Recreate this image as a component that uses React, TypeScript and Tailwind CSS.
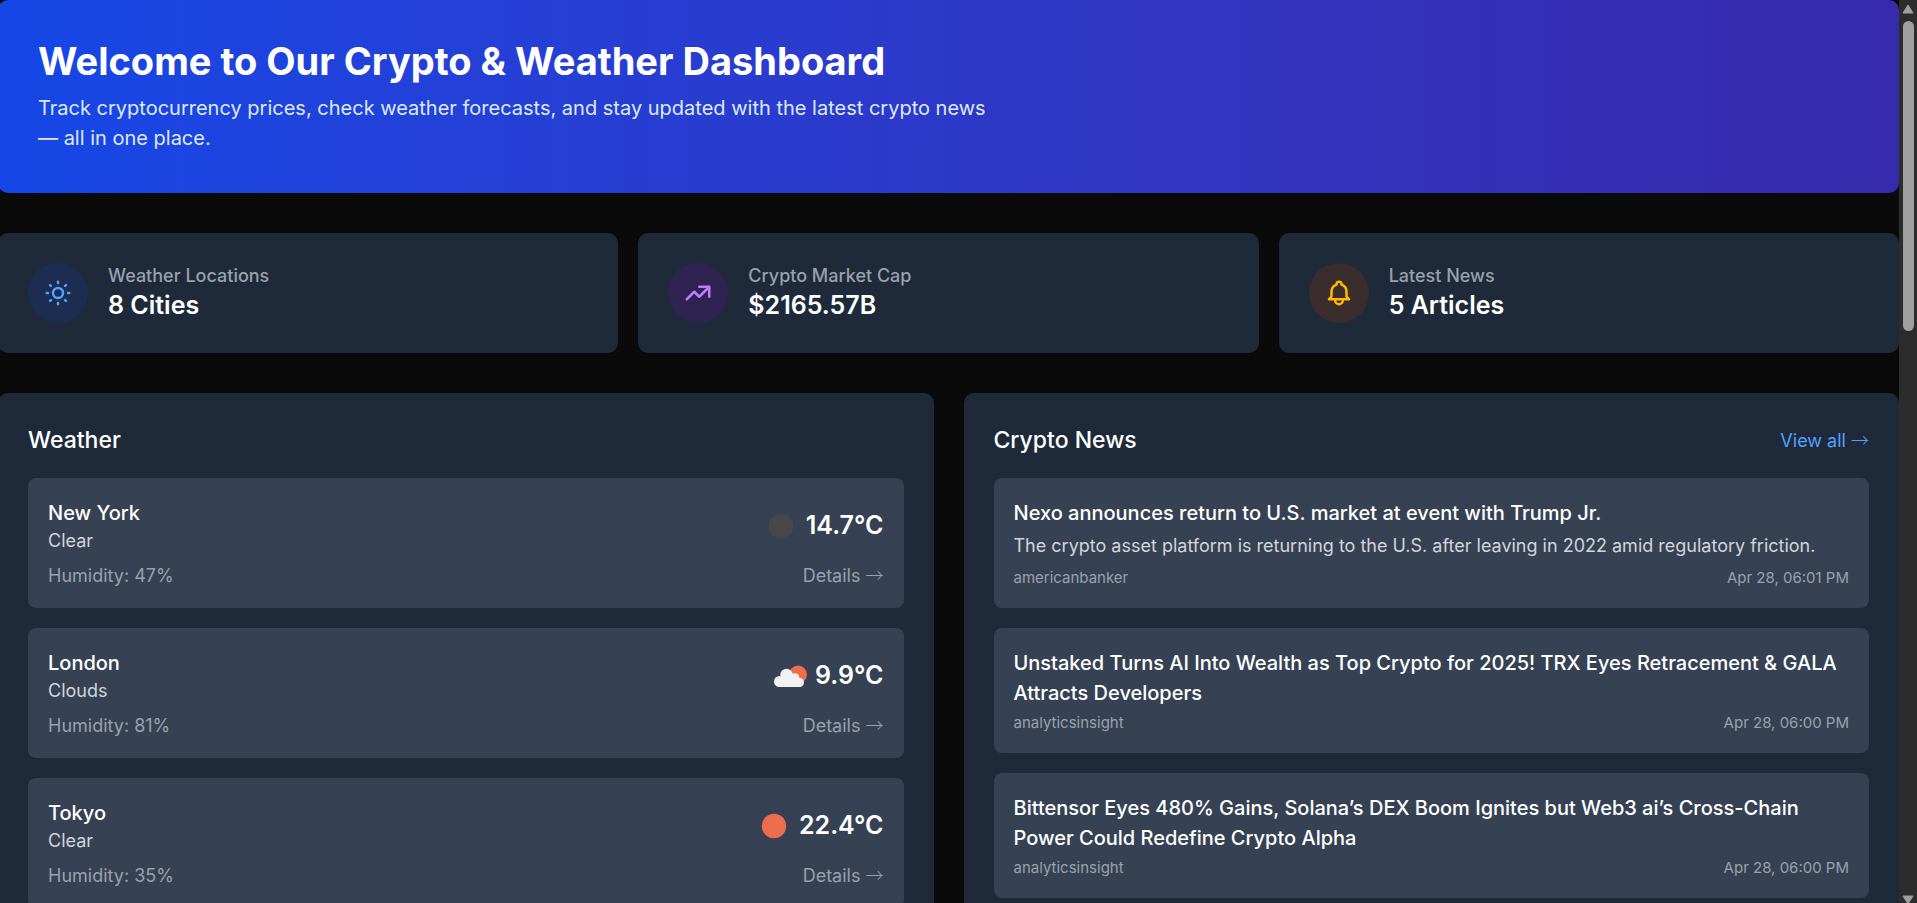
type Sky = "night" | "cloudy" | "sun";

const cities: { name: string; sky: Sky; condition: string; temp: string; humidity: number }[] = [
  { name: "New York", sky: "night", condition: "Clear", temp: "14.7°C", humidity: 47 },
  { name: "London", sky: "cloudy", condition: "Clouds", temp: "9.9°C", humidity: 81 },
  { name: "Tokyo", sky: "sun", condition: "Clear", temp: "22.4°C", humidity: 35 },
];

const articles = [
  {
    title: "Nexo announces return to U.S. market at event with Trump Jr.",
    summary:
      "The crypto asset platform is returning to the U.S. after leaving in 2022 amid regulatory friction.",
    source: "americanbanker",
    date: "Apr 28, 06:01 PM",
  },
  {
    title:
      "Unstaked Turns AI Into Wealth as Top Crypto for 2025! TRX Eyes Retracement & GALA Attracts Developers",
    source: "analyticsinsight",
    date: "Apr 28, 06:00 PM",
  },
  {
    title:
      "Bittensor Eyes 480% Gains, Solana’s DEX Boom Ignites but Web3 ai’s Cross-Chain Power Could Redefine Crypto Alpha",
    source: "analyticsinsight",
    date: "Apr 28, 06:00 PM",
  },
];

const stats = [
  {
    label: "Weather Locations",
    value: "8 Cities",
    tint: "bg-[#1c2d51] text-[#51a2ff]",
    icon: "M12 3v1m0 16v1m9-9h-1M4 12H3m15.364 6.364l-.707-.707M6.343 6.343l-.707-.707m12.728 0l-.707.707M6.343 17.657l-.707.707M16 12a4 4 0 11-8 0 4 4 0 018 0z",
  },
  {
    label: "Crypto Market Cap",
    value: "$2165.57B",
    tint: "bg-[#2f2451] text-[#c27aff]",
    icon: "M13 7h8m0 0v8m0-8l-8 8-4-4-6 6",
  },
  {
    label: "Latest News",
    value: "5 Articles",
    tint: "bg-[#3b2d2d] text-[#ffb900]",
    icon: "M15 17h5l-1.405-1.405A2.032 2.032 0 0118 14.158V11a6.002 6.002 0 00-4-5.659V5a2 2 0 10-4 0v.341C7.67 6.165 6 8.388 6 11v3.159c0 .538-.214 1.055-.595 1.436L4 17h5m6 0v1a3 3 0 11-6 0v-1m6 0H9",
  },
];

function SkyIcon({ sky }: { sky: Sky }) {
  return (
    <svg viewBox="0 0 50 50" className="size-[50px]" aria-hidden="true">
      {sky === "cloudy" ? (
        <>
          <circle cx="33" cy="23.500" r="9" fill="#ec6e4c" />
          <g fill="#f2f2f2">
            <circle cx="14.500" cy="30.500" r="5.500" />
            <circle cx="21.500" cy="24" r="6.200" />
            <circle cx="30" cy="26.500" r="4.300" />
            <circle cx="34.500" cy="31.500" r="4.500" />
            <path d="M14.500 36h20V27L26 22l-8 4z" />
          </g>
        </>
      ) : (
        <circle cx="25" cy="25" r="12.200" fill={sky === "sun" ? "#ec6e4c" : "#48484a"} />
      )}
    </svg>
  );
}

function Arrow() {
  return <span className="font-['Noto_Sans_CJK_JP',sans-serif] leading-none font-light">→</span>;
}

export default function App() {
  return (
    <div className="flex h-screen overflow-hidden bg-[#0a0a0a] font-['Inter',sans-serif] text-white">
      <main className="-ml-0.5 flex min-w-0 flex-1 flex-col gap-10">
        <header className="rounded-[10px] bg-linear-to-r from-[#1447e6] to-[#372aac] p-10">
          <h1 className="mb-[10px] text-[38px] leading-[43px] font-bold">
            Welcome to Our Crypto &amp; Weather Dashboard
          </h1>
          <p className="max-w-[960px] text-[20px] leading-[30px] text-[#dbeafe]">
            Track cryptocurrency prices, check weather forecasts, and stay updated with the latest
            crypto news — all in one place.
          </p>
        </header>

        <section className="grid grid-cols-3 gap-5">
          {stats.map((stat) => (
            <div
              key={stat.label}
              className="flex items-center gap-5 rounded-[10px] bg-[#1e2939] p-[30px]"
            >
              <div
                className={`flex size-[60px] items-center justify-center rounded-full ${stat.tint}`}
              >
                <svg
                  viewBox="0 0 24 24"
                  className="size-[30px]"
                  fill="none"
                  stroke="currentColor"
                  strokeWidth="2"
                  strokeLinecap="round"
                  strokeLinejoin="round"
                  aria-hidden="true"
                >
                  <path d={stat.icon} />
                </svg>
              </div>
              <div>
                <p className="text-[18px] leading-[25px] font-medium text-[#99a1af]">
                  {stat.label}
                </p>
                <p className="text-[25px] leading-[35px] font-semibold">{stat.value}</p>
              </div>
            </div>
          ))}
        </section>

        <div className="grid grid-cols-2 gap-[30px]">
          <section className="rounded-[10px] bg-[#1e2939] p-[30px]">
            <h2 className="mb-5 text-[23px] leading-[35px] font-medium">Weather</h2>
            <ul className="flex flex-col gap-5">
              {cities.map((city) => (
                <li key={city.name} className="rounded-[8px] bg-[#364153] p-5">
                  <div className="flex items-center justify-between">
                    <div>
                      <h3 className="text-[20px] leading-[30px] font-medium">{city.name}</h3>
                      <p className="text-[18px] leading-[25px] text-[#d1d5dc]">{city.condition}</p>
                    </div>
                    <div className="flex items-center">
                      <SkyIcon sky={city.sky} />
                      <span className="text-[25px] leading-[35px] font-semibold">{city.temp}</span>
                    </div>
                  </div>
                  <div className="mt-[10px] flex justify-between text-[18px] leading-[25px] text-[#99a1af]">
                    <span>Humidity: {city.humidity}%</span>
                    <a href="#details">
                      Details <Arrow />
                    </a>
                  </div>
                </li>
              ))}
            </ul>
          </section>

          <section className="rounded-[10px] bg-[#1e2939] p-[30px]">
            <div className="mb-5 flex items-center justify-between">
              <h2 className="text-[23px] leading-[35px] font-medium">Crypto News</h2>
              <a href="#news" className="text-[18px] leading-[25px] text-[#51a2ff]">
                View all <Arrow />
              </a>
            </div>
            <ul className="flex flex-col gap-5">
              {articles.map((article) => (
                <li key={article.title} className="rounded-[8px] bg-[#364153] p-5">
                  <h3 className="mb-[5px] text-[20px] leading-[30px] font-medium">
                    {article.title}
                  </h3>
                  {article.summary && (
                    <p className="mb-[10px] text-[18px] leading-[25px] text-[#d1d5dc]">
                      {article.summary}
                    </p>
                  )}
                  <div className="flex justify-between text-[15px] leading-5 text-[#99a1af]">
                    <span>{article.source}</span>
                    <time>{article.date}</time>
                  </div>
                </li>
              ))}
            </ul>
          </section>
        </div>
      </main>

      <div
        className="flex w-[18px] flex-col items-center justify-between bg-[#2c2c2c]"
        aria-hidden="true"
      >
        <div className="flex flex-col items-center gap-[7px] pt-1">
          <svg viewBox="0 0 12 10" className="h-[10px] w-3">
            <path d="M6 1 11 9H1z" fill="#9f9f9f" stroke="#9f9f9f" strokeLinejoin="round" />
          </svg>
          <div className="h-[310px] w-[11px] rounded-full bg-[#9f9f9f]" />
        </div>
        <svg viewBox="0 0 12 8" className="h-2 w-3">
          <path d="M1 1h10L6 9z" fill="#9f9f9f" stroke="#9f9f9f" strokeLinejoin="round" />
        </svg>
      </div>
    </div>
  );
}
